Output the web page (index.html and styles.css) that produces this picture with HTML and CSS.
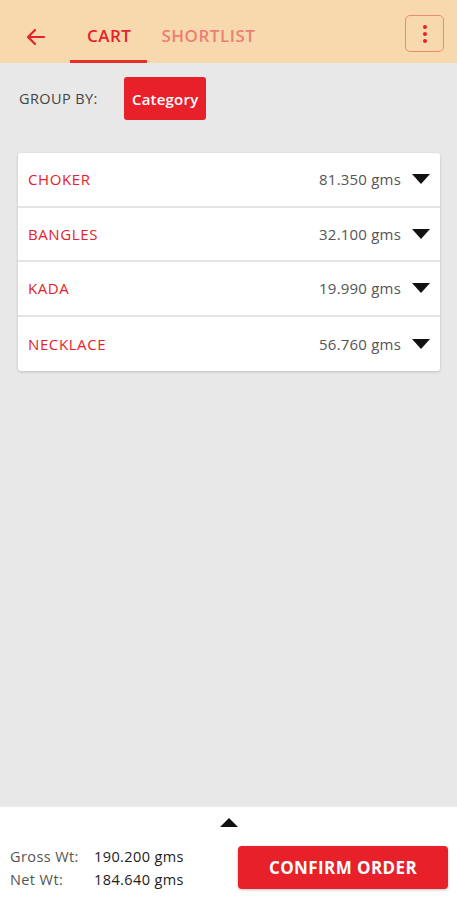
FILE: index.html
```html
<!DOCTYPE html>
<html lang="en">
<head>
  <meta charset="UTF-8">
  <meta name="viewport" content="width=device-width, initial-scale=1.0">
  <title>Cart</title>
  <link rel="stylesheet" href="styles.css">
</head>
<body>
  <div class="app">
    <header class="topbar">
      <button class="back" aria-label="Back">
        <svg width="24" height="24" viewBox="0 0 24 24"><path d="M20 12H5M11 5l-7 7 7 7" fill="none" stroke="#e8202a" stroke-width="2.2" stroke-linecap="round" stroke-linejoin="round"/></svg>
      </button>
      <nav class="tabs">
        <span class="tab active">CART</span>
        <span class="tab">SHORTLIST</span>
      </nav>
      <button class="menu" aria-label="More">
        <span class="dot"></span><span class="dot"></span><span class="dot"></span>
      </button>
    </header>

    <main class="content">
      <div class="group-by">
        <span class="group-label">GROUP BY:</span>
        <button class="chip">Category</button>
      </div>

      <ul class="list">
        <li class="row"><span class="name">CHOKER</span><span class="wt">81.350 gms</span><span class="caret"></span></li>
        <li class="row"><span class="name">BANGLES</span><span class="wt">32.100 gms</span><span class="caret"></span></li>
        <li class="row"><span class="name">KADA</span><span class="wt">19.990 gms</span><span class="caret"></span></li>
        <li class="row"><span class="name">NECKLACE</span><span class="wt">56.760 gms</span><span class="caret"></span></li>
      </ul>
    </main>

    <footer class="summary">
      <div class="handle"><span class="up"></span></div>
      <div class="summary-body">
        <div class="totals">
          <div class="total"><span class="t-label">Gross Wt:</span><span>190.200 gms</span></div>
          <div class="total"><span class="t-label">Net Wt:</span><span>184.640 gms</span></div>
        </div>
        <button class="confirm">CONFIRM ORDER</button>
      </div>
    </footer>
  </div>
</body>
</html>
```

FILE: styles.css
```css
* {
  box-sizing: border-box;
}
body {
  margin: 0;
  font-family: "Open Sans", Lato, sans-serif;
  background-color: #e8e8e8;
}
button {
  font-family: inherit;
  border: none;
  background: none;
  padding: 0;
  cursor: pointer;
}
.app {
  height: 900px;
  display: flex;
  flex-direction: column;
}

/* header */
.topbar {
  height: 63px;
  background-color: #f8d9ae;
  display: flex;
  align-items: stretch;
  padding: 0 13px 0 24px;
}
.back {
  display: flex;
  align-items: center;
  padding-top: 10px;
  margin-right: 22px;
}
.tabs {
  display: flex;
  flex: 1;
}
.tab {
  display: flex;
  align-items: center;
  padding: 11px 10px 0 14px;
  font-size: 17px;
  font-weight: 600;
  letter-spacing: 0.5px;
  color: #ee7e72;
  border-bottom: 3px solid transparent;
}
.tab.active {
  color: #e8202a;
  border-bottom-color: #e8302a;
  padding-left: 17px;
  padding-right: 16px;
}
.menu {
  align-self: center;
  margin-top: 4px;
  width: 39px;
  height: 37px;
  border: 1.5px solid #ec8a78;
  border-radius: 5px;
  display: flex;
  flex-direction: column;
  align-items: center;
  justify-content: center;
  gap: 3px;
}
.dot {
  width: 4px;
  height: 4px;
  border-radius: 50%;
  background-color: #e8202a;
}

/* content */
.content {
  flex: 1;
  padding: 14px 17px 0 18px;
}
.group-by {
  display: flex;
  align-items: center;
}
.group-label {
  font-size: 14.5px;
  letter-spacing: 0.4px;
  color: #444;
  width: 106px;
  padding-left: 1px;
}
.chip {
  background-color: #e8202a;
  color: #fff;
  font-size: 15px;
  font-weight: 600;
  letter-spacing: 0.2px;
  height: 43px;
  padding: 0 8px;
  border-radius: 3px;
}
.list {
  list-style: none;
  margin: 33px 0 0;
  padding: 0;
  background-color: #fff;
  border-radius: 3px;
  box-shadow: 0 1px 3px rgba(0, 0, 0, 0.18);
}
.row {
  height: 54.5px;
  display: flex;
  align-items: center;
  padding: 0 10px 0 10px;
  border-bottom: 2px solid #e4e4e4;
}
.row:last-child {
  border-bottom: none;
}
.name {
  flex: 1;
  font-size: 15px;
  letter-spacing: 0.6px;
  color: #e8202a;
}
.wt {
  font-size: 15px;
  letter-spacing: 0.2px;
  color: #555;
  margin-right: 11px;
}
.caret {
  width: 0;
  height: 0;
  border-left: 9px solid transparent;
  border-right: 9px solid transparent;
  border-top: 10px solid #111;
}

/* footer */
.summary {
  height: 93px;
  background-color: #fff;
}
.handle {
  display: flex;
  justify-content: center;
  padding-top: 11px;
  height: 39px;
}
.up {
  width: 0;
  height: 0;
  border-left: 9px solid transparent;
  border-right: 9px solid transparent;
  border-bottom: 9px solid #111;
}
.summary-body {
  display: flex;
  align-items: center;
  justify-content: space-between;
  padding: 0 9px 0 10px;
}
.totals {
  display: flex;
  flex-direction: column;
  gap: 4px;
  font-size: 14.5px;
  letter-spacing: 0.4px;
  color: #222;
}
.t-label {
  display: inline-block;
  width: 84px;
  color: #555;
}
.confirm {
  width: 210px;
  height: 43px;
  background-color: #e8202a;
  color: #fff;
  font-size: 17px;
  font-weight: 700;
  letter-spacing: 0.4px;
  border-radius: 4px;
  box-shadow: 0 1px 3px rgba(0, 0, 0, 0.25);
}
```
